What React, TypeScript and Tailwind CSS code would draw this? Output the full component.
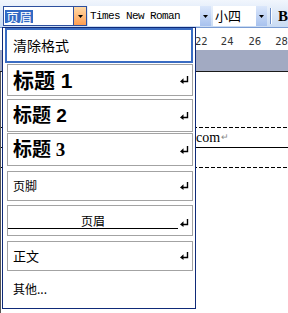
import React from "react";

function ReturnMark() {
  return (
    <svg width="9" height="8" viewBox="0 0 9 8" className="shrink-0">
      <path d="M7.5 0 V5.5 H2" stroke="#000" strokeWidth="1.4" fill="none" />
      <polygon points="0,5.5 3.5,2.3 3.5,8" fill="#000" />
    </svg>
  );
}

function DownArrow() {
  return (
    <svg width="5" height="3" viewBox="0 0 5 3">
      <polygon points="0,0 5,0 2.5,3" fill="#000" />
    </svg>
  );
}

const itemBox = "border border-[#a3a3a3] bg-white flex items-center pl-[5px] pr-[3px]";

export default function App() {
  return (
    <div className="relative w-[288px] h-[313px] overflow-hidden bg-white font-['Liberation_Sans','Noto_Sans_CJK_SC',sans-serif] text-black">
      {/* Toolbar */}
      <div className="h-[28px] flex items-start pt-[6px] pl-[3px] bg-gradient-to-b from-[#f1f6fd] to-[#c9dbf3] border-b border-[#7a9cd3]">
        {/* style combo */}
        <div className="w-[84px] h-[20px] flex border border-[#2d4f9e] bg-white">
          <div className="flex-1 flex items-center pl-[1px]">
            <span className="bg-[#316ac5] text-white text-[13px] leading-[13px] px-[1px] font-['Noto_Sans_CJK_SC',sans-serif]">
              页眉
            </span>
          </div>
          <div className="w-[13px] flex items-center justify-center bg-gradient-to-b from-[#ffd9a6] to-[#ff9d4f] border-l border-[#2d4f9e]">
            <DownArrow />
          </div>
        </div>
        {/* font combo */}
        <div className="ml-[1px] w-[123px] h-[20px] flex bg-white">
          <div className="flex-1 flex items-center pl-[2px] font-['Liberation_Mono',monospace] text-[11px] tracking-[-0.6px]">
            Times New Roman
          </div>
          <div className="w-[11px] flex items-center justify-center bg-gradient-to-b from-[#dbe7fb] to-[#a8c2ee]">
            <DownArrow />
          </div>
        </div>
        {/* size combo */}
        <div className="ml-[2px] w-[54px] h-[20px] flex bg-white">
          <div className="flex-1 flex items-center pl-[2px] text-[13px] font-['Noto_Sans_CJK_SC',sans-serif]">
            小四
          </div>
          <div className="w-[11px] flex items-center justify-center bg-gradient-to-b from-[#dbe7fb] to-[#a8c2ee]">
            <DownArrow />
          </div>
        </div>
        <div className="ml-[3px] mt-[2px] w-[2px] h-[16px] border-l border-[#6a8cc8] border-r border-r-white" />
        <div className="ml-[6px] h-[20px] flex items-center font-['Liberation_Serif',serif] font-bold text-[15px]">
          B
        </div>
      </div>

      {/* Ruler */}
      <div className="h-[22px] bg-white flex items-center pt-[4px] pl-[195px] text-[10px] text-[#333] font-['DejaVu_Sans',sans-serif]">
        <span className="w-[27px]">22</span>
        <span className="w-[29px]">24</span>
        <span className="w-[28px]">26</span>
        <span>28</span>
      </div>

      {/* app background band */}
      <div className="h-[22px] bg-[#a2aac2] border-b border-[#1a1a1a]" />

      {/* Page */}
      <div className="relative bg-white h-[241px] border-l border-[#555]">
        <div className="h-[55px]" />
        <div className="h-px bg-[repeating-linear-gradient(90deg,#000_0_4px,transparent_4px_6px)]" />
        <div className="h-[19px] flex items-center pl-[195px] font-['Liberation_Serif',serif] text-[14px] leading-none">
          com<span className="text-[9px] text-[#888] ml-[1px]">↵</span>
        </div>
        <div className="h-px bg-black" />
        <div className="h-[19px]" />
        <div className="h-px bg-[repeating-linear-gradient(90deg,#000_0_4px,transparent_4px_6px)]" />
      </div>

      {/* Style dropdown */}
      <div className="absolute left-[2px] top-[27px] w-[194px] h-[282px] bg-white border border-[#0f2a78] flex flex-col pl-[4px] pr-[2px]">
        <div className="-ml-[2px] w-[188px] h-[35px] border-2 border-[#3a6cc2] bg-white flex items-center pl-[6px] text-[14px] font-['Noto_Sans_CJK_SC',sans-serif]">
          清除格式
        </div>
        <div className={`mt-[1px] h-[32px] ${itemBox}`}>
          <span className="flex-1 font-bold text-[21px] leading-none">标题 1</span>
          <ReturnMark />
        </div>
        <div className={`mt-[3px] h-[33px] ${itemBox}`}>
          <span className="flex-1 font-bold text-[19px] leading-none">标题 2</span>
          <ReturnMark />
        </div>
        <div className={`mt-[1px] h-[33px] ${itemBox}`}>
          <span className="flex-1 font-bold text-[19px] leading-none font-['Liberation_Serif','Noto_Sans_CJK_SC',serif]">标题 3</span>
          <ReturnMark />
        </div>
        <div className={`mt-[5px] h-[30px] ${itemBox}`}>
          <span className="flex-1 text-[12px] font-['Noto_Sans_CJK_SC',sans-serif]">页脚</span>
          <ReturnMark />
        </div>
        <div className="mt-[4px] h-[31px] border border-[#a3a3a3] bg-white flex items-end pr-[3px] pb-[6px]">
          <div className="w-[170px] border-b border-black text-center text-[12px] leading-[15px] font-['Noto_Sans_CJK_SC',sans-serif]">
            页眉
          </div>
          <span className="ml-[2px] mb-[2px]">
            <ReturnMark />
          </span>
        </div>
        <div className={`mt-[5px] h-[30px] ${itemBox}`}>
          <span className="flex-1 text-[13px] font-['Noto_Sans_CJK_SC',sans-serif]">正文</span>
          <ReturnMark />
        </div>
        <div className="mt-[9px] pl-[6px] text-[12px] font-['Noto_Sans_CJK_SC',sans-serif]">
          其他...
        </div>
      </div>
    </div>
  );
}
